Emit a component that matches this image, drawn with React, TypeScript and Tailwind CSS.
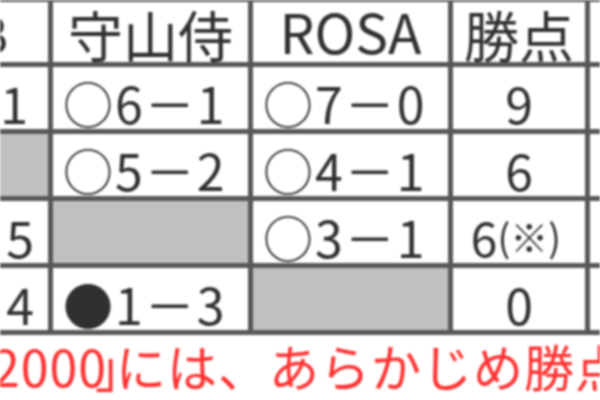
import React from "react";

const base = "bg-white flex items-center overflow-hidden whitespace-nowrap";
const gray = "bg-[#c0c0c0]";
const score = `${base} pl-[10px] text-[50px] leading-none pt-[8px] tracking-[2px]`;

export default function App() {
  return (
    <div className="w-[600px] h-[400px] bg-white overflow-hidden font-['Noto_Sans_CJK_JP',sans-serif] text-[#303030] blur-[1.2px]">
      <div className="grid grid-cols-[48px_195px_195px_132px_10px] grid-rows-[60px_62px_62px_62px_62px] gap-[5px] bg-[#585858] pt-[2px] pb-[5px]">
        {/* header */}
        <div className={`${base} justify-end pr-[40px] text-[50px] leading-none`}>B</div>
        <div className={`${base} justify-center items-end pb-[1px] text-[55px] leading-none`}>守山侍</div>
        <div className={`${base} justify-center items-end pb-[4px] text-[55px] leading-none`}>ROSA</div>
        <div className={`${base} justify-center items-end pb-[1px] text-[55px] leading-none`}>勝点</div>
        <div className={base}></div>

        {/* row 1 */}
        <div className={`${base} justify-end pr-[20px] text-[50px] leading-none pt-[8px]`}>1</div>
        <div className={score}>○6－1</div>
        <div className={score}>○7－0</div>
        <div className={`${base} justify-center text-[50px] leading-none pt-[8px]`}>9</div>
        <div className={base}></div>

        {/* row 2 */}
        <div className={gray}></div>
        <div className={score}>○5－2</div>
        <div className={score}>○4－1</div>
        <div className={`${base} justify-center text-[50px] leading-none pt-[8px]`}>6</div>
        <div className={base}></div>

        {/* row 3 */}
        <div className={`${base} justify-end pr-[14px] text-[50px] leading-none pt-[8px]`}>5</div>
        <div className={gray}></div>
        <div className={score}>○3－1</div>
        <div className={`${base} justify-center leading-none pt-[8px] pr-[6px]`}>
          <span className="text-[48px]">6</span>
          <span className="text-[38px]">(※)</span>
        </div>
        <div className={base}></div>

        {/* row 4 */}
        <div className={`${base} justify-end pr-[14px] text-[50px] leading-none pt-[8px]`}>4</div>
        <div className={score}>●1－3</div>
        <div className={gray}></div>
        <div className={`${base} justify-center text-[50px] leading-none pt-[8px]`}>0</div>
        <div className={base}></div>
      </div>
      <div className="whitespace-nowrap text-[#ff3030] text-[50px] leading-[60px] -ml-[8px] tracking-[1px]">
        2000<span className="inline-block -ml-[12px] -mr-[30px]">」</span>には、あらかじめ勝点
      </div>
    </div>
  );
}
